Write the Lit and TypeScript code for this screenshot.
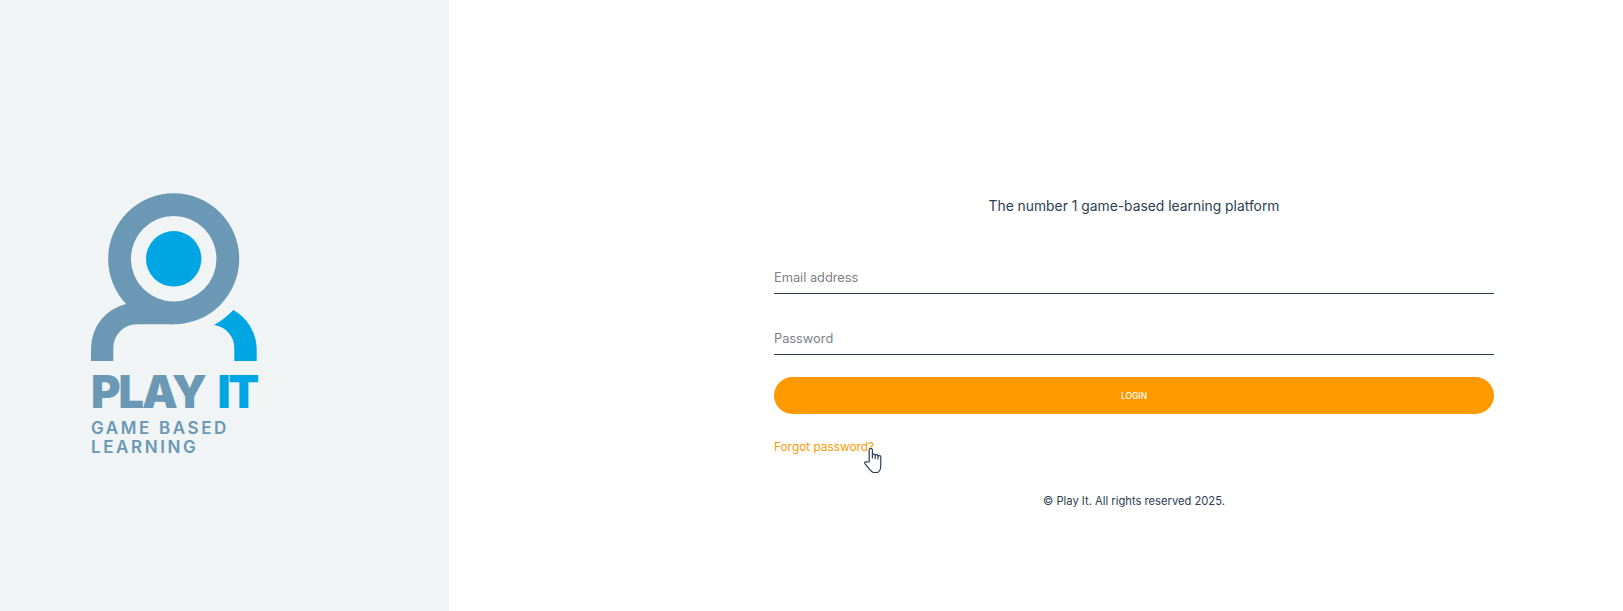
import { LitElement, html, css } from "lit";
import { customElement } from "lit/decorators.js";

@customElement("app-root")
export class AppRoot extends LitElement {
  static styles = css`
    :host {
      display: grid;
      grid-template-columns: 449px 1fr;
      height: 611px;
      overflow: hidden;
      background: #fff;
      font-family: Inter, "Noto Sans", sans-serif;
      color: #2c3e50;
    }
    .brand {
      background: #f0f4f5;
      padding: 190px 0 0 91px;
      box-sizing: border-box;
    }
    .mark {
      display: block;
      width: 166px;
      height: 171px;
    }
    .steel { fill: #6b98b4; }
    .blue { fill: #00a6e4; }
    .name {
      margin-top: 9px;
      font-size: 45px;
      line-height: 44px;
      font-weight: 900;
      letter-spacing: -2px;
      word-spacing: 5.5px;
      color: #6b98b4;
      white-space: nowrap;
    }
    .name span {
      color: #00a6e4;
      letter-spacing: -2.2px;
    }
    .tag {
      margin-top: 5px;
      font-size: 17px;
      line-height: 18.5px;
      font-weight: 600;
      letter-spacing: 2.6px;
      color: #6b98b4;
    }
    .main {
      padding: 195px 0 0 325px;
    }
    .panel {
      width: 720px;
      display: flex;
      flex-direction: column;
    }
    .lead {
      margin: 0 0 49px;
      font-size: 13.85px;
      line-height: 22px;
      text-align: center;
    }
    input {
      display: block;
      width: 100%;
      height: 28px;
      margin-bottom: 33px;
      padding: 0 0 4px;
      box-sizing: border-box;
      border: 0;
      border-bottom: 1px solid #2c3e50;
      outline: none;
      background: transparent;
      font: inherit;
      font-size: 12.8px;
    }
    input::placeholder { color: #7d8086; opacity: 1; }
    input.last { margin-bottom: 22px; }
    button {
      height: 37px;
      border: 0;
      border-radius: 18.5px;
      background: #ff9900;
      color: #fff;
      font: inherit;
      font-size: 8.5px;
      font-weight: 500;
    }
    .forgot {
      position: relative;
      margin-top: 24px;
      font-size: 11.85px;
      line-height: 18px;
      color: #ff9900;
    }
    .hand {
      position: absolute;
      left: 90px;
      top: 10px;
      width: 19px;
      height: 25px;
    }
    .copy {
      margin: 36px 0 0;
      font-size: 11.2px;
      line-height: 18px;
      text-align: center;
    }
  `;

  render() {
    return html`
      <aside class="brand">
        <svg class="mark" viewBox="91 190 166 171">
          <path class="steel" fill-rule="evenodd" d="M173.7 193.3a65.5 65.5 0 1 0 0 131a65.5 65.5 0 1 0 0-131Zm0 22.7a42.8 42.8 0 1 1 0 85.6a42.8 42.8 0 1 1 0-85.6Z" />
          <circle class="blue" cx="173.7" cy="258.8" r="27.7" />
          <path class="steel" d="M91 361V347.7A45.7 45.7 0 0 1 126 304L160 305L173.7 324.3H136.7A23.4 23.4 0 0 0 113.3 347.7V361Z" />
          <path class="blue" d="M214 325A78.7 78.7 0 0 0 233.3 310A45.7 45.7 0 0 1 256.7 347.7V361H234.3V347.7A23.4 23.4 0 0 0 214 325Z" />
        </svg>
        <div class="name">PLAY <span>IT</span></div>
        <div class="tag">GAME BASED<br />LEARNING</div>
      </aside>
      <main class="main">
        <div class="panel">
          <p class="lead">The number 1 game-based learning platform</p>
          <input type="email" placeholder="Email address" />
          <input class="last" type="password" placeholder="Password" />
          <button>LOGIN</button>
          <div class="forgot">
            Forgot password?
            <svg class="hand" viewBox="0 0 19 25">
              <path fill="#fff" stroke="#2c3e50" stroke-width="1.2" stroke-linejoin="round" d="M5.2 14V2a1.6 1.6 0 0 1 3.2 0V10V7.5a1.4 1.4 0 0 1 2.8 0V10.5V8a1.4 1.4 0 0 1 2.8 0V11V9a1.4 1.4 0 0 1 2.8 0V17c0 4-1.5 7-3.5 7.5H9.5C7.5 24.5 5 21 .8 15.5c-.6-1.2 1-2.5 2-1.5Z" />
            </svg>
          </div>
          <p class="copy">© Play It. All rights reserved 2025.</p>
        </div>
      </main>
    `;
  }
}
